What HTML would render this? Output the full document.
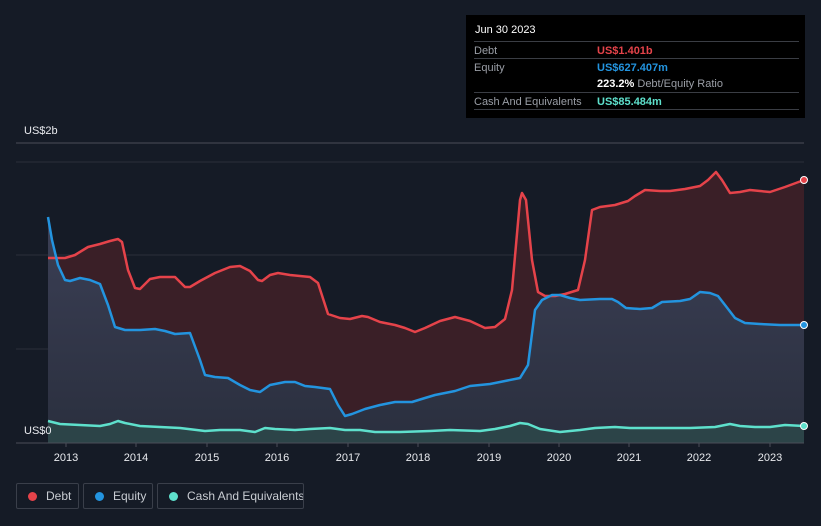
<!DOCTYPE html><html><head><style>
body{margin:0;width:821px;height:526px;background:#151b26;font-family:"Liberation Sans",sans-serif;overflow:hidden;position:relative}
.tt{position:absolute;left:466px;top:15px;width:339px;height:103px;background:#000;font-size:11px}
.tt .r{position:absolute;left:8px;right:6px;border-top:1px solid #3a3d44;height:17px}
.tt span{position:absolute;top:3px}
.lg{position:absolute;top:483px;height:26px;border:1px solid #3a3f4a;border-radius:2px;color:#c8ccd2;font-size:12px;box-sizing:border-box;line-height:24px;white-space:nowrap;overflow:hidden}
.lg i{display:inline-block;width:9px;height:9px;border-radius:50%;margin:0 9px 0 11px;vertical-align:-1px}
.yl{position:absolute;color:#e8eaee;font-size:11px}
</style></head><body>
<svg width="821" height="526" style="position:absolute;left:0;top:0">
<defs><linearGradient id="eq" x1="0" y1="0" x2="0" y2="1"><stop offset="0" stop-color="#3b3f55"/><stop offset="1" stop-color="#2a2f3e"/></linearGradient></defs>
<line x1="16" y1="143" x2="804" y2="143" stroke="#4a4e58"/>
<line x1="16" y1="162" x2="804" y2="162" stroke="#2a2f39"/>
<line x1="16" y1="255" x2="804" y2="255" stroke="#2a2f39"/>
<line x1="16" y1="349" x2="804" y2="349" stroke="#2a2f39"/>
<path fill="#3a1f27" d="M48,258 L65,258 75,255 88,247 100,244 110,241 118,239 122,242 128,270 135,288 140,289 150,279 160,277 175,277 185,287 190,287 200,281 215,273 230,267 240,266 250,271 258,280 262,281 270,275 278,273 290,275 310,277 318,283 328,314 340,318 350,319 362,316 368,317 380,322 395,325 405,328 415,332 425,328 440,321 455,317 470,321 485,328 495,327 505,319 512,290 520,200 522,193 526,200 532,260 538,292 545,296 555,296 565,294 578,290 585,260 592,210 600,207 615,205 628,201 635,196 645,190 660,191 670,191 685,189 700,186 708,180 716,172 722,180 730,193 740,192 750,190 760,191 770,192 785,187 804,180 L804,443 L48,443Z"/>
<path fill="url(#eq)" d="M48,217 L52,240 58,265 65,280 70,281 80,278 90,280 100,284 108,305 115,327 125,330 140,330 155,329 165,331 175,334 190,333 200,360 205,375 215,377 228,378 240,385 250,390 260,392 270,385 285,382 295,382 305,386 315,387 330,389 338,405 345,416 352,414 365,409 380,405 395,402 412,402 425,398 435,395 455,391 470,386 490,384 505,381 520,378 528,365 535,310 542,300 552,295 560,295 570,298 580,300 600,299 612,299 618,302 626,308 640,309 652,308 662,302 680,301 690,299 700,292 710,293 718,296 725,305 735,318 745,323 760,324 780,325 804,325 L804,443 L48,443Z"/>
<path fill="#2c4448" d="M48,421 L60,424 80,425 100,426 110,424 118,421 125,423 140,426 160,427 180,428 205,431 220,430 240,430 255,432 265,428 275,429 295,430 310,429 330,428 345,430 360,430 375,432 400,432 430,431 450,430 480,431 495,429 510,426 520,423 528,424 540,429 560,432 580,430 595,428 615,427 630,428 650,428 690,428 715,427 730,424 740,426 755,427 770,427 785,425 804,426 L804,443 L48,443Z"/>
<g fill="none" stroke-width="2.5" stroke-linejoin="round">
<path stroke="#e5434a" d="M48,258 L65,258 75,255 88,247 100,244 110,241 118,239 122,242 128,270 135,288 140,289 150,279 160,277 175,277 185,287 190,287 200,281 215,273 230,267 240,266 250,271 258,280 262,281 270,275 278,273 290,275 310,277 318,283 328,314 340,318 350,319 362,316 368,317 380,322 395,325 405,328 415,332 425,328 440,321 455,317 470,321 485,328 495,327 505,319 512,290 520,200 522,193 526,200 532,260 538,292 545,296 555,296 565,294 578,290 585,260 592,210 600,207 615,205 628,201 635,196 645,190 660,191 670,191 685,189 700,186 708,180 716,172 722,180 730,193 740,192 750,190 760,191 770,192 785,187 804,180"/>
<path stroke="#2394df" d="M48,217 L52,240 58,265 65,280 70,281 80,278 90,280 100,284 108,305 115,327 125,330 140,330 155,329 165,331 175,334 190,333 200,360 205,375 215,377 228,378 240,385 250,390 260,392 270,385 285,382 295,382 305,386 315,387 330,389 338,405 345,416 352,414 365,409 380,405 395,402 412,402 425,398 435,395 455,391 470,386 490,384 505,381 520,378 528,365 535,310 542,300 552,295 560,295 570,298 580,300 600,299 612,299 618,302 626,308 640,309 652,308 662,302 680,301 690,299 700,292 710,293 718,296 725,305 735,318 745,323 760,324 780,325 804,325"/>
<path stroke="#5ee0cc" d="M48,421 L60,424 80,425 100,426 110,424 118,421 125,423 140,426 160,427 180,428 205,431 220,430 240,430 255,432 265,428 275,429 295,430 310,429 330,428 345,430 360,430 375,432 400,432 430,431 450,430 480,431 495,429 510,426 520,423 528,424 540,429 560,432 580,430 595,428 615,427 630,428 650,428 690,428 715,427 730,424 740,426 755,427 770,427 785,425 804,426"/>
</g>
<line x1="16" y1="443" x2="804" y2="443" stroke="#4a4e58"/>
<g stroke="#4a4e58"><line x1="66" y1="443" x2="66" y2="447"/><line x1="136" y1="443" x2="136" y2="447"/><line x1="207" y1="443" x2="207" y2="447"/><line x1="277" y1="443" x2="277" y2="447"/><line x1="348" y1="443" x2="348" y2="447"/><line x1="418" y1="443" x2="418" y2="447"/><line x1="489" y1="443" x2="489" y2="447"/><line x1="559" y1="443" x2="559" y2="447"/><line x1="629" y1="443" x2="629" y2="447"/><line x1="699" y1="443" x2="699" y2="447"/><line x1="770" y1="443" x2="770" y2="447"/></g>
<circle cx="804" cy="180" r="3.5" fill="#e5434a" stroke="#fff" stroke-width="1"/>
<circle cx="804" cy="325" r="3.5" fill="#2394df" stroke="#fff" stroke-width="1"/>
<circle cx="804" cy="426" r="3.5" fill="#5ee0cc" stroke="#fff" stroke-width="1"/>
<g fill="#e8eaee" font-size="11" text-anchor="middle" font-family="Liberation Sans"><text x="66" y="461">2013</text><text x="136" y="461">2014</text><text x="207" y="461">2015</text><text x="277" y="461">2016</text><text x="348" y="461">2017</text><text x="418" y="461">2018</text><text x="489" y="461">2019</text><text x="559" y="461">2020</text><text x="629" y="461">2021</text><text x="699" y="461">2022</text><text x="770" y="461">2023</text></g>
</svg>
<div class="yl" style="left:24px;top:125px">US$2b</div>
<div class="yl" style="left:24px;top:425px">US$0</div>
<div class="tt">
<div style="position:absolute;left:9px;top:9px;color:#fff;font-size:11px">Jun 30 2023</div>
<div class="r" style="top:26px"><span style="color:#9a9ea6;left:0">Debt</span><span style="left:123px;color:#e5434a;font-weight:bold">US$1.401b</span></div>
<div class="r" style="top:43px"><span style="color:#9a9ea6;left:0">Equity</span><span style="left:123px;color:#2394df;font-weight:bold">US$627.407m</span></div>
<div class="r" style="top:60px;border:0"><span style="left:123px;color:#fff;white-space:nowrap"><b>223.2%</b> <span style="position:static;color:#9a9ea6">Debt/Equity Ratio</span></span></div>
<div class="r" style="top:77px"><span style="color:#9a9ea6;left:0">Cash And Equivalents</span><span style="left:123px;color:#5ee0cc;font-weight:bold">US$85.484m</span></div>
<div class="r" style="top:94px;height:0"></div>
</div>
<div class="lg" style="left:16px;width:63px"><i style="background:#e5434a"></i>Debt</div>
<div class="lg" style="left:83px;width:70px"><i style="background:#2394df"></i>Equity</div>
<div class="lg" style="left:157px;width:147px"><i style="background:#5ee0cc"></i>Cash And Equivalents</div>
</body></html>
